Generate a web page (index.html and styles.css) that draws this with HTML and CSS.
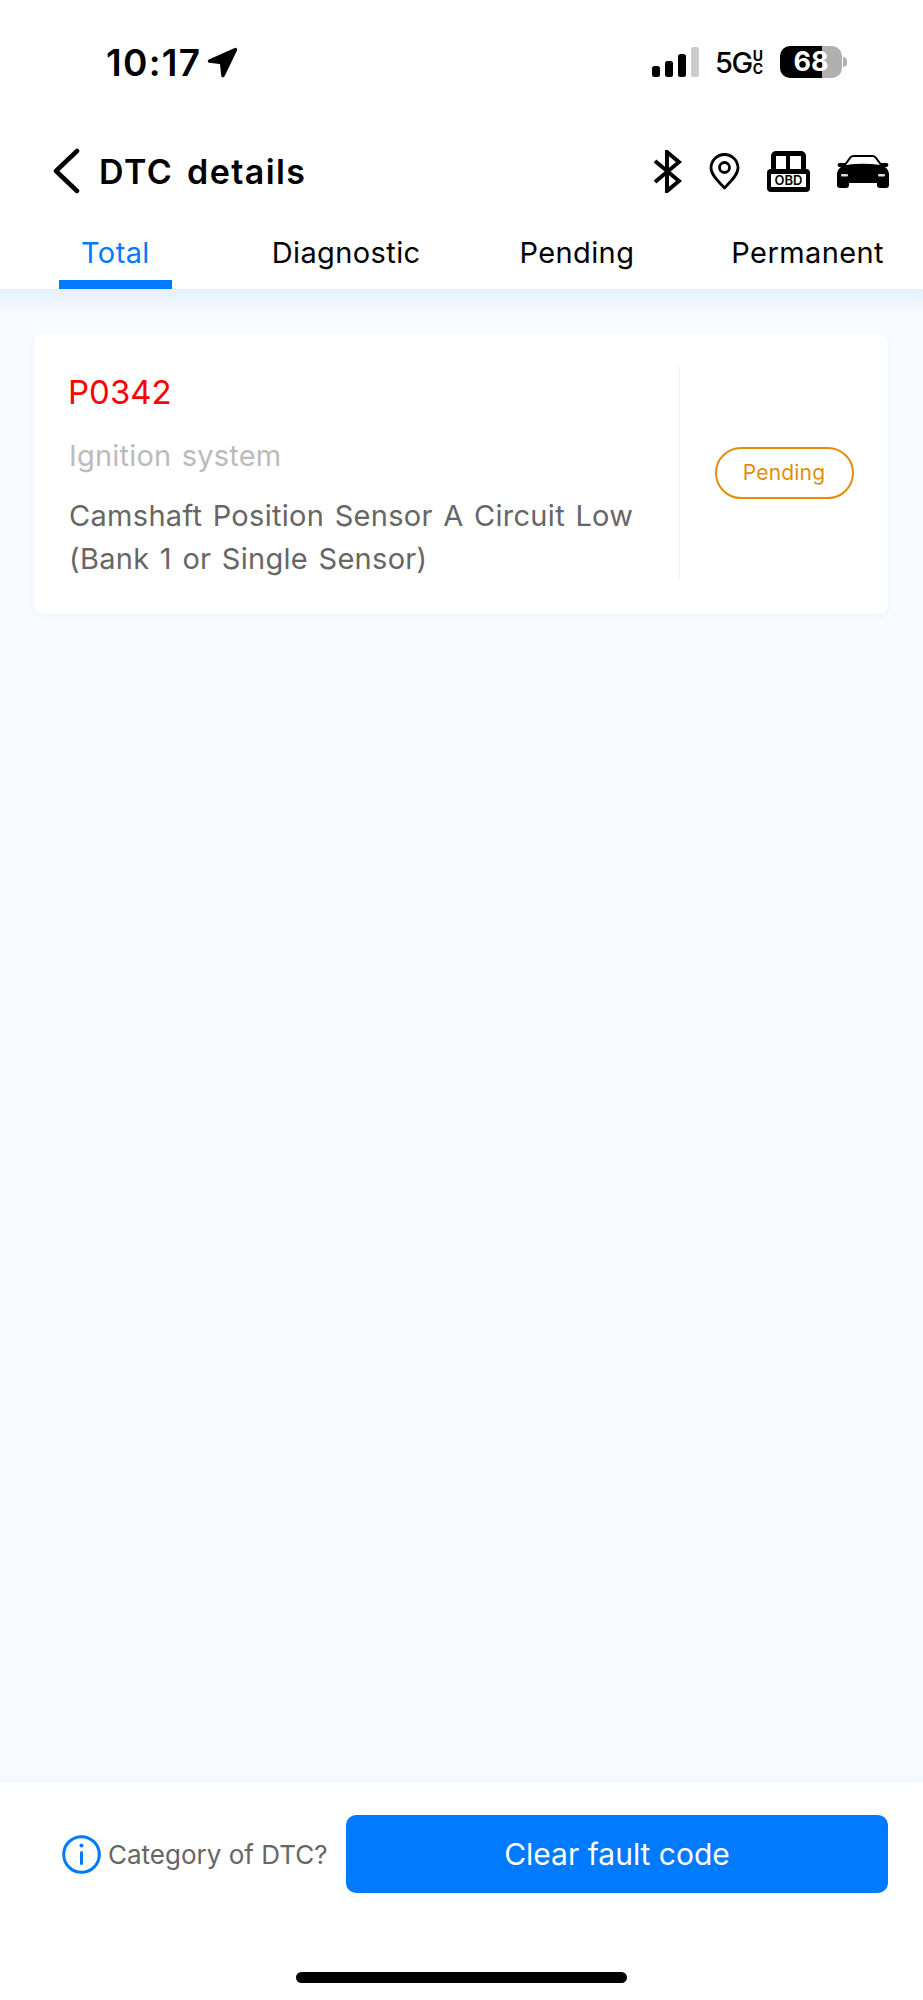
FILE: index.html
```html
<!DOCTYPE html>
<html lang="en">
<head>
    <meta charset="UTF-8">
    <meta name="viewport" content="width=device-width, initial-scale=1.0">
    <title>DTC details</title>
    <link rel="stylesheet" href="styles.css">
</head>
<body>
    <div class="page">

        <!-- Status bar -->
        <div class="status">
            <div class="status-left">
                <span class="time">10:17</span>
                <svg class="arrow" width="31" height="31" viewBox="0 0 31 31"><path d="M28.500 2.500 2.500 14 14.500 15.500 16 28.500z" fill="#000" stroke="#000" stroke-width="3.500" stroke-linejoin="round"/></svg>
            </div>
            <div class="status-right">
                <div class="signal">
                    <span class="sig sig1"></span>
                    <span class="sig sig2"></span>
                    <span class="sig sig3"></span>
                    <span class="sig sig4"></span>
                </div>
                <div class="network">
                    <span class="net-big">5G</span>
                    <span class="net-small"><span>U</span><span>C</span></span>
                </div>
                <div class="battery-wrap">
                    <div class="battery">68</div>
                    <span class="nub"></span>
                </div>
            </div>
        </div>

        <!-- Header -->
        <div class="header">
            <div class="title-wrap">
                <svg class="back" width="28" height="46" viewBox="0 0 28 46"><path d="M25 3 4 23l21 20" fill="none" stroke="#000" stroke-width="4.500" stroke-linecap="round" stroke-linejoin="round"/></svg>
                <h1 class="title">DTC details</h1>
            </div>
            <div class="icons">
                <svg width="29" height="43" viewBox="0 0 29 43"><path d="M2 11 26 31 14 41V2l12 10L2 32" fill="none" stroke="#000" stroke-width="4"/></svg>
                <svg width="31" height="37" viewBox="0 0 31 37"><path d="M15.500 35C10 29 2 22 2 15a13.500 13.500 0 0 1 27 0c0 7-8 14-13.500 20z" fill="none" stroke="#000" stroke-width="2.800" stroke-linejoin="round"/><circle cx="15.500" cy="14.500" r="5" fill="none" stroke="#000" stroke-width="2.800"/></svg>
                <svg width="43" height="41" viewBox="0 0 43 41"><rect x="4" y="0" width="35" height="22" rx="5" fill="#000"/><rect x="9" y="5" width="10" height="14" fill="#fff"/><rect x="23" y="5" width="11" height="14" fill="#fff"/><rect x="0" y="18" width="43" height="23" rx="4" fill="#000"/><rect x="4" y="23" width="35" height="13" fill="#fff"/><text x="21.500" y="34" class="obd-text" text-anchor="middle">OBD</text></svg>
                <svg width="52" height="33" viewBox="0 0 52 33"><path d="M8 8 12.500 2C13.500.7 15 0 17 0h18c2 0 3.500.7 4.500 2L44 8h5.500c2.500 0 2.500 3.500 0 4H48c2.500 2 4 4.500 4 7v11c0 2-1 3-3 3h-6c-2 0-3-1-3-3v-2H12v2c0 2-1 3-3 3H3c-2 0-3-1-3-3V19c0-2.500 1.500-5 4-7H2.500C0 11.500 0 8 2.500 8z" fill="#000"/><path d="M9 10 14 3.300C14.800 2.400 15.700 2 17 2h18c1.300 0 2.200.4 3 1.300L43 10c-11-1.600-23-1.600-34 0z" fill="#fff"/><rect x="4" y="19" width="7" height="2.500" rx="1" fill="#ddd"/><rect x="41" y="19" width="7" height="2.500" rx="1" fill="#ddd"/></svg>
            </div>
        </div>

        <!-- Tabs -->
        <div class="tabs">
            <div class="tab active"><span class="tab-label">Total</span><span class="tab-bar"></span></div>
            <div class="tab"><span class="tab-label">Diagnostic</span><span class="tab-bar"></span></div>
            <div class="tab"><span class="tab-label">Pending</span><span class="tab-bar"></span></div>
            <div class="tab"><span class="tab-label">Permanent</span><span class="tab-bar"></span></div>
        </div>

        <!-- List -->
        <div class="content">
            <div class="card">
                <div class="card-main">
                    <div class="code">P0342</div>
                    <div class="system">Ignition system</div>
                    <div class="desc">Camshaft Position Sensor A Circuit Low<br>(Bank 1 or Single Sensor)</div>
                </div>
                <div class="card-side">
                    <span class="badge">Pending</span>
                </div>
            </div>
        </div>

        <!-- Footer -->
        <div class="footer">
            <div class="footer-row">
                <div class="category">
                    <svg width="39" height="39" viewBox="0 0 39 39"><circle cx="19.500" cy="19.500" r="17.800" fill="none" stroke="#007aff" stroke-width="3"/><rect x="18" y="16" width="3" height="14" rx="1.500" fill="#007aff"/><circle cx="19.500" cy="10.500" r="2" fill="#007aff"/></svg>
                    <span class="category-text">Category of DTC?</span>
                </div>
                <button class="clear-btn">Clear fault code</button>
            </div>
            <div class="home-bar"></div>
        </div>

    </div>
</body>
</html>
```

FILE: styles.css
```css
* {
    box-sizing: border-box;
}
body {
    margin: 0;
    font-family: Inter, "Liberation Sans", sans-serif;
    background-color: #fff;
}
.page {
    display: flex;
    flex-direction: column;
    height: 2000px;
}

/* status bar */
.status {
    height: 124px;
    flex: none;
    display: flex;
    justify-content: space-between;
    align-items: center;
    padding: 0 76px 0 106px;
}
.status-left {
    display: flex;
    align-items: center;
    gap: 6px;
}
.time {
    font-size: 37px;
    font-weight: 600;
    letter-spacing: 1.3px;
    color: #000;
}
.status-right {
    display: flex;
    align-items: center;
}
.signal {
    display: flex;
    align-items: flex-end;
    gap: 5px;
    height: 30px;
}
.sig {
    display: block;
    width: 8px;
    border-radius: 2.500px;
    background-color: #000;
}
.sig1 { height: 11px; }
.sig2 { height: 16px; }
.sig3 { height: 23px; }
.sig4 { height: 30px; background-color: #ccc; }
.network {
    display: flex;
    align-items: center;
    margin-left: 16px;
    color: #000;
}
.net-big {
    font-size: 29px;
    font-weight: 500;
    letter-spacing: -1.5px;
}
.net-small {
    display: flex;
    flex-direction: column;
    font-size: 14px;
    font-weight: 700;
    line-height: 13px;
    margin-left: 1px;
}
.battery-wrap {
    display: flex;
    align-items: center;
    margin-left: 17px;
}
.battery {
    width: 62px;
    height: 32px;
    border-radius: 10px;
    background: linear-gradient(to right, #000 0, #000 68%, #b0b0b0 68%, #b0b0b0 100%);
    color: #fff;
    font-size: 27px;
    font-weight: 700;
    line-height: 32px;
    text-align: center;
}
.nub {
    display: block;
    width: 4px;
    height: 10px;
    margin-left: 1px;
    border-radius: 0 4px 4px 0;
    background-color: #b0b0b0;
}

/* header */
.header {
    height: 94px;
    flex: none;
    display: flex;
    justify-content: space-between;
    align-items: center;
    padding: 0 34px 0 52px;
}
.title-wrap {
    display: flex;
    align-items: center;
    gap: 19px;
}
.title {
    margin: 0;
    font-size: 34px;
    font-weight: 600;
    letter-spacing: 1.4px;
    word-spacing: 4px;
    color: #000;
}
.icons {
    display: flex;
    align-items: center;
    gap: 27px;
}
.obd-text {
    font-family: Inter, sans-serif;
    font-size: 13px;
    font-weight: 600;
}

/* tabs */
.tabs {
    height: 71px;
    flex: none;
    display: grid;
    grid-template-columns: repeat(4, 1fr);
    background-color: #fff;
}
.tab {
    display: flex;
    flex-direction: column;
    align-items: center;
    justify-content: space-between;
    font-size: 29px;
    letter-spacing: 0.4px;
    color: #000;
}
.tab-label {
    line-height: 70px;
    height: 62px;
}
.tab-bar {
    display: block;
    width: 113px;
    height: 9px;
}
.tab.active {
    color: #007aff;
}
.tab.active .tab-bar {
    background-color: #007aff;
}

/* list */
.content {
    flex: 1;
    padding: 44px 35px 0 34px;
    background: linear-gradient(to bottom, #e4f0fd 0, #f8fbff 26px, #f8fbff calc(100% - 16px), #f3f8fe 100%);
}
.card {
    display: flex;
    height: 281px;
    padding: 34px 0 35px;
    border-radius: 10px;
    background-color: #fff;
    box-shadow: 0 2px 6px rgba(120, 120, 255, 0.07);
}
.card-main {
    width: 646px;
    padding-left: 35px;
    border-right: 1px solid #eeeeff;
}
.code {
    font-size: 33px;
    line-height: 40px;
    margin-top: 5px;
    margin-left: -1px;
    color: #ff0000;
}
.system {
    font-size: 29px;
    line-height: 40px;
    margin-top: 24px;
    letter-spacing: 0.2px;
    word-spacing: 2px;
    color: #bbb;
}
.desc {
    font-size: 29px;
    line-height: 43px;
    margin-top: 18px;
    letter-spacing: 0.3px;
    word-spacing: 2px;
    color: #666;
}
.card-side {
    flex: 1;
    display: flex;
    justify-content: center;
    align-items: center;
}
.badge {
    display: block;
    width: 139px;
    height: 52px;
    border: 2px solid #e38d0b;
    border-radius: 26px;
    font-size: 21px;
    letter-spacing: 0.2px;
    line-height: 48px;
    text-align: center;
    color: #e38d0b;
}

/* footer */
.footer {
    height: 217px;
    flex: none;
    display: flex;
    flex-direction: column;
    padding: 32px 35px 17px 62px;
    background-color: #fff;
}
.footer-row {
    display: flex;
    justify-content: space-between;
    align-items: center;
}
.category {
    display: flex;
    align-items: center;
    gap: 7px;
}
.category-text {
    font-size: 26px;
    color: #666;
}
.clear-btn {
    width: 542px;
    height: 78px;
    border: none;
    border-radius: 10px;
    background-color: #007aff;
    color: #fff;
    font-family: inherit;
    font-size: 30px;
}
.home-bar {
    width: 331px;
    height: 11px;
    margin: auto 0 0 234px;
    border-radius: 6px;
    background-color: #000;
}
```
